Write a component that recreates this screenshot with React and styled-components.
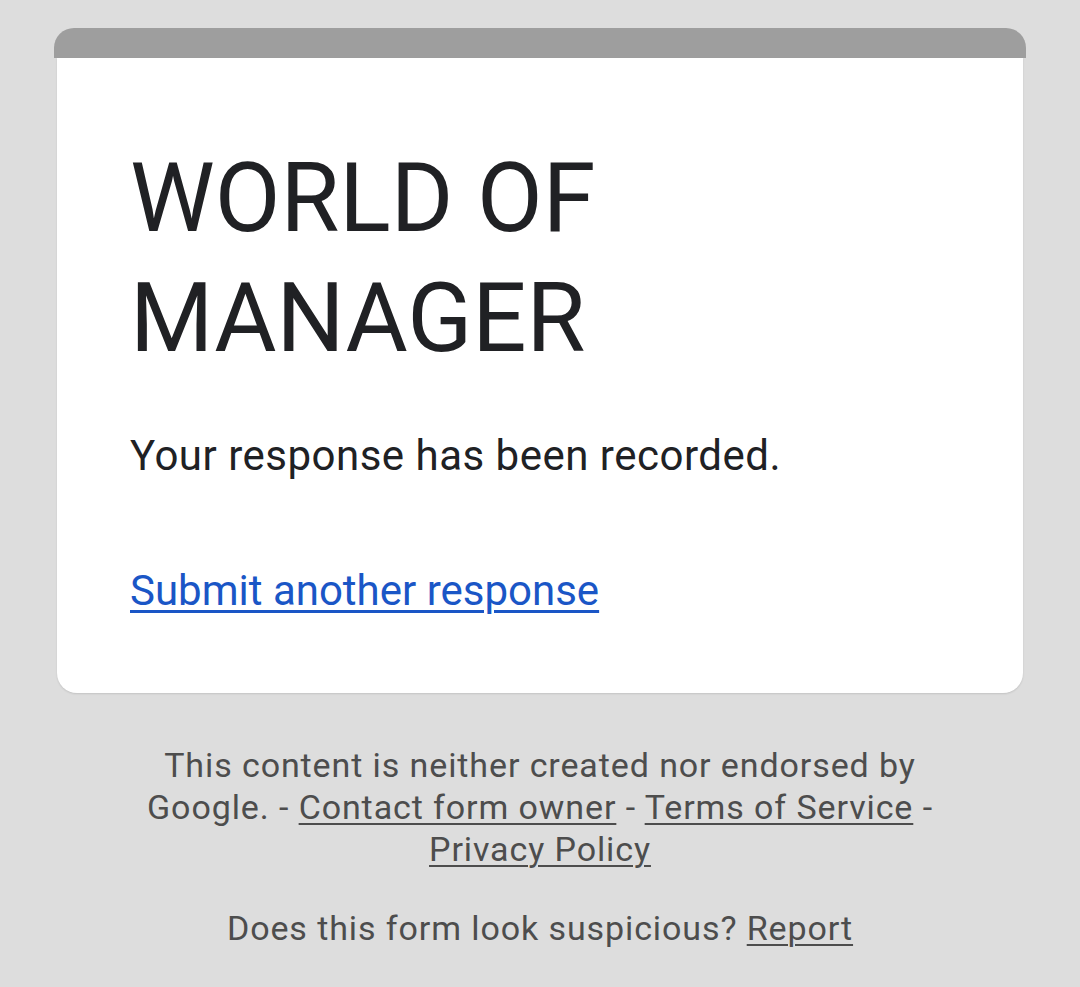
import React from "react";
import styled, { createGlobalStyle } from "styled-components";

const Global = createGlobalStyle`
  html, body { margin: 0; padding: 0; background: #dddddd; }
  body { font-family: Roboto, "Noto Sans", Arial, sans-serif; }
`;

const Page = styled.div`
  padding: 28px 54px 0;
  display: flex;
  flex-direction: column;
  align-items: stretch;
`;

const Card = styled.div`
  display: flex;
  flex-direction: column;
`;

const TopBar = styled.div`
  height: 30px;
  background: #9e9e9e;
  border-radius: 20px 20px 0 0;
`;

const CardBody = styled.div`
  margin: 0 3px;
  background: #ffffff;
  border-radius: 0 0 20px 20px;
  box-shadow: 0 1px 2px rgba(0, 0, 0, 0.12);
  padding: 80px 73px 74px;
`;

const Title = styled.h1`
  margin: 0;
  font-family: Roboto, Arial, sans-serif;
  font-weight: 400;
  font-size: 95.5px;
  line-height: 120px;
  color: #202124;
  width: 560px;
`;

const Message = styled.p`
  margin: 50px 0 0;
  font-size: 42px;
  line-height: 56px;
  letter-spacing: 0.5px;
  color: #202124;
`;

const Link = styled.a`
  display: block;
  margin-top: 79px;
  font-size: 42px;
  line-height: 56px;
  color: #1a56c6;
  text-decoration: underline;
  text-underline-offset: 5px;
  text-decoration-thickness: 3px;
`;

const Footer = styled.div`
  margin: 51px auto 0;
  width: 830px;
  text-align: center;
  color: #4d4d4d;
  font-size: 34px;
  line-height: 42px;
  letter-spacing: 0.9px;
`;

const FooterPara = styled.p`
  margin: ${(p) => (p.$spaced ? "37px 0 0" : "0")};
`;

const FooterLink = styled.a`
  color: #4d4d4d;
  text-decoration: underline;
  text-underline-offset: 4px;
  text-decoration-thickness: 2px;
`;

export default function App() {
  return (
    <>
      <Global />
      <Page>
        <Card>
          <TopBar />
          <CardBody>
            <Title>WORLD OF MANAGER</Title>
            <Message>Your response has been recorded.</Message>
            <Link href="#">Submit another response</Link>
          </CardBody>
        </Card>
        <Footer>
          <FooterPara>
            This content is neither created nor endorsed by Google. -{" "}
            <FooterLink href="#">Contact form owner</FooterLink> -{" "}
            <FooterLink href="#">Terms of Service</FooterLink> -{" "}
            <FooterLink href="#">Privacy Policy</FooterLink>
          </FooterPara>
          <FooterPara $spaced>
            Does this form look suspicious?{" "}
            <FooterLink href="#">Report</FooterLink>
          </FooterPara>
        </Footer>
      </Page>
    </>
  );
}
